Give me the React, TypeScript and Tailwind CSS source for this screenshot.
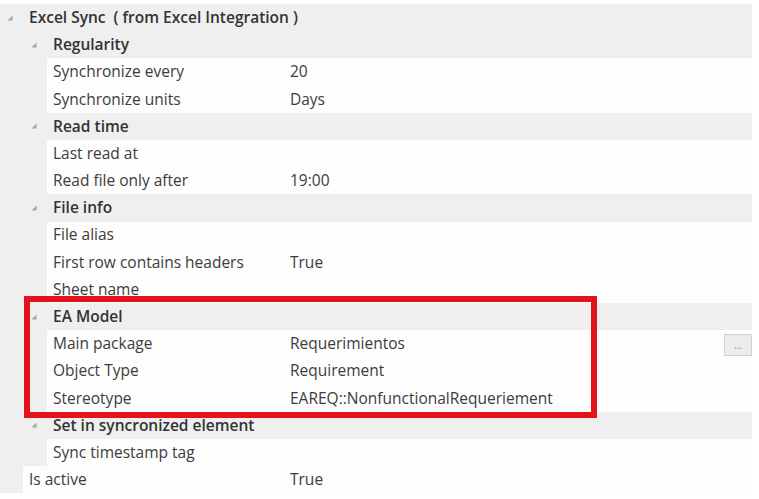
type Item =
  | { kind: "top"; label: string }
  | { kind: "group"; label: string }
  | { kind: "prop"; label: string; value?: string; button?: boolean }
  | { kind: "root"; label: string; value?: string };

const items: Item[] = [
  { kind: "top", label: "Excel Sync  ( from Excel Integration )" },
  { kind: "group", label: "Regularity" },
  { kind: "prop", label: "Synchronize every", value: "20" },
  { kind: "prop", label: "Synchronize units", value: "Days" },
  { kind: "group", label: "Read time" },
  { kind: "prop", label: "Last read at" },
  { kind: "prop", label: "Read file only after", value: "19:00" },
  { kind: "group", label: "File info" },
  { kind: "prop", label: "File alias" },
  { kind: "prop", label: "First row contains headers", value: "True" },
  { kind: "prop", label: "Sheet name" },
  { kind: "group", label: "EA Model" },
  { kind: "prop", label: "Main package", value: "Requerimientos", button: true },
  { kind: "prop", label: "Object Type", value: "Requirement" },
  { kind: "prop", label: "Stereotype", value: "EAREQ::NonfunctionalRequeriement" },
  { kind: "group", label: "Set in syncronized element" },
  { kind: "prop", label: "Sync timestamp tag" },
  { kind: "root", label: "Is active", value: "True" },
];

const Arrow = () => (
  <svg width="6" height="6" viewBox="0 0 6 6" className="shrink-0">
    <polygon points="5.5,0.5 5.5,5.5 0.5,5.5" fill="#a6a6a6" />
  </svg>
);

const Row = ({ item }: { item: Item }) => {
  if (item.kind === "top") {
    return (
      <div className="flex h-[27.2px] items-center">
        <div className="flex w-[29px] justify-start pl-[7px]">
          <Arrow />
        </div>
        <span className="whitespace-pre font-semibold text-[#333]">{item.label}</span>
      </div>
    );
  }
  if (item.kind === "group") {
    return (
      <div className="flex h-[27.2px] items-center">
        <div className="flex w-[53px] justify-start pl-[31px]">
          <Arrow />
        </div>
        <span className="font-semibold text-[#333]">{item.label}</span>
      </div>
    );
  }
  const indent = item.kind === "prop" ? "ml-[47px]" : "ml-[23px]";
  const labelW = item.kind === "prop" ? "w-[243px]" : "w-[267px]";
  return (
    <div className={`flex h-[27.2px] items-center bg-[#fdfdfd] ${indent}`}>
      <span className={`${labelW} shrink-0 pl-[6px]`}>{item.label}</span>
      <span>{item.value}</span>
      {item.kind === "prop" && item.button && (
        <div className="ml-auto mt-[3px] flex h-[22px] w-[28px] items-center justify-center border border-[#d0d0d0] bg-[#ececec] text-[10px] leading-none text-[#888]">
          ...
        </div>
      )}
    </div>
  );
};

export default function App() {
  return (
    <div className="h-[499px] w-[759px] bg-white pt-[4px]" style={{ fontFamily: '"Open Sans", "Noto Sans", sans-serif' }}>
      <div className="relative w-[752px] bg-[#efefef] text-[15.5px] text-[#3c3c3c]">
        {items.map((it, i) => (
          <Row key={i} item={it} />
        ))}
        <div className="absolute left-[24px] top-[292px] h-[122px] w-[573px] border-[6px] border-[#e3131b]" />
      </div>
    </div>
  );
}
